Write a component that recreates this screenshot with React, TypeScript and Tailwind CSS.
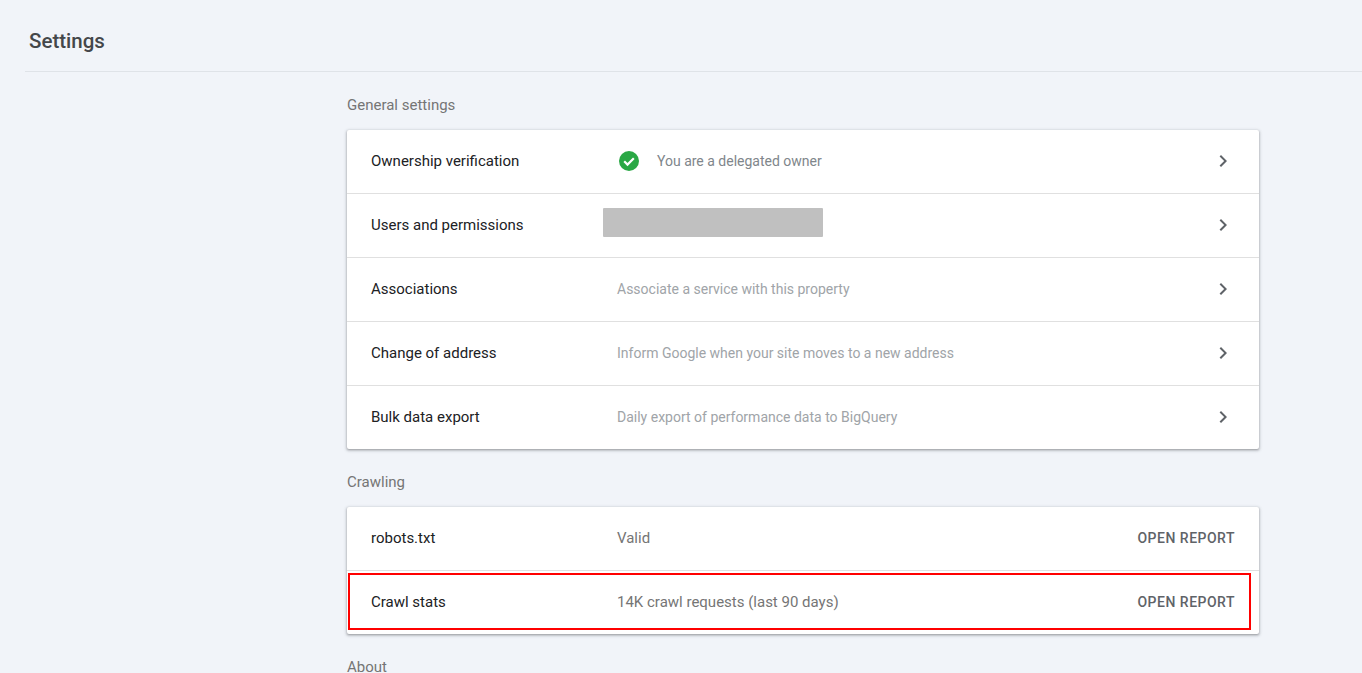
const font = "[font-family:Roboto,'Liberation_Sans',sans-serif]";

interface RowProps {
  label: string;
  last?: boolean;
  action?: boolean;
  children?: React.ReactNode;
}

const Chevron = () => (
  <svg viewBox="0 0 24 24" className="h-6 w-6 fill-[#5f6368]" aria-hidden="true">
    <path d="M10 6L8.59 7.41 13.17 12l-4.58 4.59L10 18l6-6z" />
  </svg>
);

const Row = ({ label, last, action, children }: RowProps) => (
  <div
    className={`relative flex items-center pl-6 pr-6 ${
      last ? 'h-[63px]' : 'h-16 border-b border-[#e0e0e0]'
    }`}
  >
    <div className="w-[246px] shrink-0 text-[15px] text-[#202124]">{label}</div>
    <div className="flex-1 flex items-center min-w-0 -mt-px">{children}</div>
    <div className="-mt-px">
      {action ? (
        <span className="text-sm font-medium tracking-[0.5px] text-[#5f6368]">OPEN REPORT</span>
      ) : (
        <Chevron />
      )}
    </div>
  </div>
);

const Section = ({ title, children }: { title: string; children: React.ReactNode }) => (
  <section>
    <h2 className="h-[58px] pt-2 flex items-center text-[15px] font-normal text-[#757575]">{title}</h2>
    <div className="bg-white rounded-[2px] shadow-[0_1px_3px_1px_rgba(60,64,67,0.22),0_1px_2px_rgba(60,64,67,0.3)]">
      {children}
    </div>
  </section>
);

const CheckBadge = () => (
  <svg viewBox="0 0 24 24" className="h-6 w-6 mr-4" aria-hidden="true">
    <circle cx="12" cy="12" r="10" fill="#2aa845" />
    <path d="M7.2 12.3l3.3 3.3 6.3-6.4" fill="none" stroke="#fff" strokeWidth="2.2" />
  </svg>
);

export default function App() {
  return (
    <div className={`h-screen overflow-hidden bg-[#f1f4f9] ${font}`}>
      <header className="ml-[25px] h-[72px] pl-1 pt-3 flex items-center border-b border-[#dfe3e8]">
        <h1 className="text-[20.5px] font-medium text-[#44474a]">Settings</h1>
      </header>
      <main className="ml-[347px] w-[912px]">
        <Section title="General settings">
          <Row label="Ownership verification">
            <CheckBadge />
            <span className="text-sm text-[#80868b]">You are a delegated owner</span>
          </Row>
          <Row label="Users and permissions">
            <div className="-ml-[14px] -mt-[5px] h-[29px] w-[220px] rounded-[1px] bg-[#c0c0c0]" />
          </Row>
          <Row label="Associations">
            <span className="text-sm text-[#a0a4a8]">Associate a service with this property</span>
          </Row>
          <Row label="Change of address">
            <span className="text-sm text-[#a0a4a8]">Inform Google when your site moves to a new address</span>
          </Row>
          <Row label="Bulk data export" last>
            <span className="text-sm text-[#a0a4a8]">Daily export of performance data to BigQuery</span>
          </Row>
        </Section>
        <Section title="Crawling">
          <Row label="robots.txt" action>
            <span className="text-[15px] text-[#757575]">Valid</span>
          </Row>
          <Row label="Crawl stats" action last>
            <span className="text-[15px] text-[#757575]">14K crawl requests (last 90 days)</span>
            <div className="absolute left-px top-[2px] right-2 bottom-1 border-2 border-[#ff0000]" />
          </Row>
        </Section>
        <Section title="About">
          <div className="h-16" />
        </Section>
      </main>
    </div>
  );
}
